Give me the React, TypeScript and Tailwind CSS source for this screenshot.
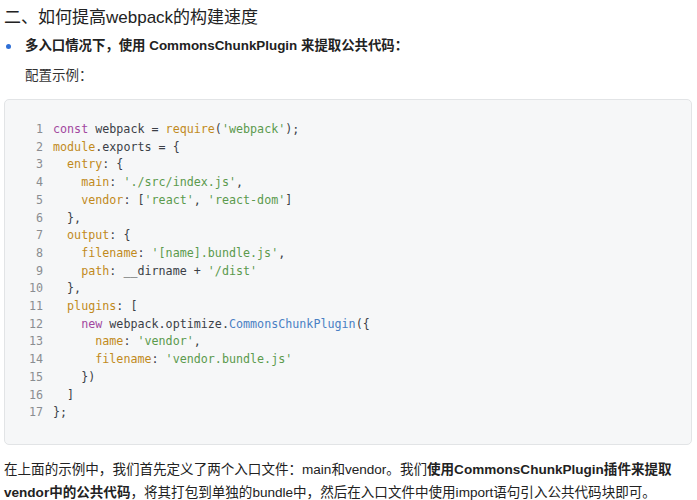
import React from "react";

type Tok = [string, string];

const K = "text-[#a2479f]"; // keyword purple
const F = "text-[#c18a1c]"; // property / fn gold
const S = "text-[#5b9a4d]"; // string green
const C = "text-[#4a80c4]"; // class blue
const P = "text-[#3b3f47]"; // plain

const lines: Tok[][] = [
  [[K, "const"], [P, " webpack = "], [F, "require"], [P, "("], [S, "'webpack'"], [P, ");"]],
  [[F, "module"], [P, ".exports = {"]],
  [[P, "  "], [F, "entry"], [P, ": {"]],
  [[P, "    "], [F, "main"], [P, ": "], [S, "'./src/index.js'"], [P, ","]],
  [[P, "    "], [F, "vendor"], [P, ": ["], [S, "'react'"], [P, ", "], [S, "'react-dom'"], [P, "]"]],
  [[P, "  },"]],
  [[P, "  "], [F, "output"], [P, ": {"]],
  [[P, "    "], [F, "filename"], [P, ": "], [S, "'[name].bundle.js'"], [P, ","]],
  [[P, "    "], [F, "path"], [P, ": __dirname + "], [S, "'/dist'"]],
  [[P, "  },"]],
  [[P, "  "], [F, "plugins"], [P, ": ["]],
  [[P, "    "], [K, "new"], [P, " webpack.optimize."], [C, "CommonsChunkPlugin"], [P, "({"]],
  [[P, "      "], [F, "name"], [P, ": "], [S, "'vendor'"], [P, ","]],
  [[P, "      "], [F, "filename"], [P, ": "], [S, "'vendor.bundle.js'"]],
  [[P, "    })"]],
  [[P, "  ]"]],
  [[P, "};"]],
];

export default function App() {
  return (
    <div
      className="w-[697px] h-[500px] bg-white text-[#1f1f1f] overflow-hidden"
      style={{ fontFamily: '"Liberation Sans", "Noto Sans CJK SC", sans-serif' }}
    >
      <h1 className="pl-[4px] pt-[5px] text-[17px] leading-[26px] font-normal text-[#222]">
        二、如何提高webpack的构建速度
      </h1>
      <div className="flex items-center pl-[6px] mt-[4px] h-[22px]">
        <span className="w-[5px] h-[5px] rounded-full bg-[#2f6fd6] mr-[14px]" />
        <span className="text-[13.4px] font-bold text-[#222]">
          多入口情况下，使用 CommonsChunkPlugin 来提取公共代码：
        </span>
      </div>
      <div className="pl-[25px] mt-[8px] text-[13.5px] leading-[22px] text-[#333]">配置示例：</div>
      <div className="ml-[4px] w-[688px] mt-[12px] h-[346px] rounded-[5px] border border-[#e2e4e6] bg-[#f6f7f8] pt-[21px]">
        <div
          className="text-[11.7px] leading-[17.7px]"
          style={{ fontFamily: '"DejaVu Sans Mono", "Liberation Mono", monospace' }}
        >
          {lines.map((toks, i) => (
            <div key={i} className="flex whitespace-pre">
              <span className="w-[48px] pr-[10px] text-right text-[#8a8d91]">{i + 1}</span>
              <span>
                {toks.map((t, j) => (
                  <span key={j} className={t[0]}>
                    {t[1]}
                  </span>
                ))}
              </span>
            </div>
          ))}
        </div>
      </div>
      <p className="pl-[4px] pt-[13px] text-[13.55px] leading-[23px] text-[#222]">
        在上面的示例中，我们首先定义了两个入口文件：main和vendor。我们
        <b>使用CommonsChunkPlugin插件来提取</b>
        <br />
        <b>vendor中的公共代码</b>，将其打包到单独的bundle中，然后在入口文件中使用import语句引入公共代码块即可。
      </p>
    </div>
  );
}
